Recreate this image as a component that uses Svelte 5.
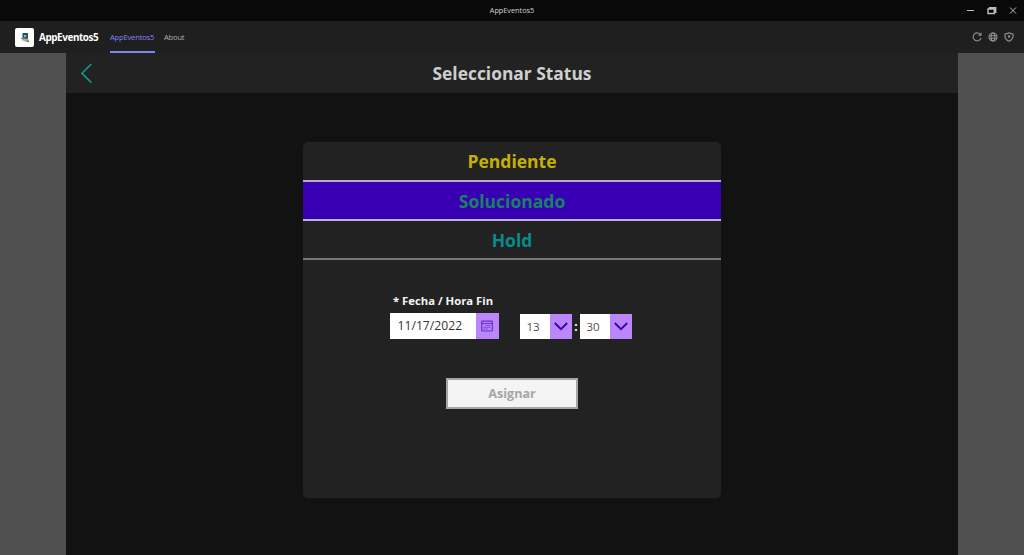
<script>
  const statuses = [
    { name: 'Pendiente', kind: 'pending' },
    { name: 'Solucionado', kind: 'solved' },
    { name: 'Hold', kind: 'hold' }
  ];
  let selected = $state('solved');
</script>

<div class="window">
  <div class="titlebar">
    <span></span>
    <span class="wintitle">AppEventos5</span>
    <div class="controls">
      <svg width="52" height="12" viewBox="0 0 52 12" fill="none" stroke="#bdbdbd">
        <path d="M1 5.5H8" />
        <path d="M22 4H28.3V8.5H22ZM23.5 3.4V2.7H29.7V7.3H28.4" stroke-width="1.4" />
        <path d="M44 2.5L50 8.5M50 2.5L44 8.5" />
      </svg>
    </div>
  </div>

  <nav>
    <div class="logo">
      <svg width="10" height="11" viewBox="0 0 10 11">
        <path d="M2.5 1H8V6.5L6.8 7H2.5Z" fill="#204f76" />
        <path d="M4 3H6.3V4.8H4Z" fill="#9cbad0" />
        <path d="M0.5 6L5 5.3L6 7L3 8Z" fill="#389ca6" />
        <path d="M1.5 8L7.8 6.4L8.8 8L6 9.7Z" fill="#d89b59" />
        <path d="M6 9.5L8.8 8V10.3Z" fill="#2476a5" />
      </svg>
    </div>
    <span class="brand">AppEventos5</span>
    <span class="tab active">AppEventos5</span>
    <span class="tab">About</span>
    <div class="tools">
      <svg width="42" height="12" viewBox="0 0 42 12" fill="none" stroke="#919191" stroke-width="1.1">
        <path d="M8.7 4A4 4 0 1 0 9 7M9 1.7V4.3H6.3" />
        <circle cx="21" cy="6" r="4" />
        <ellipse cx="21" cy="6" rx="1.8" ry="4" />
        <path d="M17 4.7H25M17 7.3H25" />
        <path d="M37 1.8Q39 3 41 3V6Q40.5 9 37 10.3Q33.5 9 33 6V3Q35 3 37 1.8Z" />
        <circle cx="37" cy="5.5" r="0.7" fill="#919191" />
      </svg>
    </div>
  </nav>

  <div class="stage">
    <main>
      <header>
        <svg class="back" width="12" height="20" viewBox="0 0 12 20" fill="none" stroke="#0da28f" stroke-width="1.6">
          <path d="M10.3 1L1 10.3L10.3 19.5" />
        </svg>
        <h1>Seleccionar Status</h1>
      </header>

      <section class="card">
        <div class="list">
          {#each statuses as s}
            <button class="status {s.kind}" class:selected={selected === s.kind} onclick={() => (selected = s.kind)}>
              <span>{s.name}</span>
            </button>
          {/each}
        </div>

        <div class="form">
          <div class="label">* Fecha / Hora Fin</div>
          <div class="fields">
            <div class="field date">
              <span class="value">11/17/2022</span>
              <span class="trigger">
                <svg width="12" height="12" viewBox="0 0 12 12" fill="none" stroke="#6a2fd0" stroke-width="1.2">
                  <rect x="0.7" y="1.2" width="10.6" height="9.8" rx="0.5" />
                  <path d="M1 3.5H11" />
                  <path d="M4.5 5.5H10M2.5 7.3H9.5M2.5 9H7" stroke-width="1" stroke-dasharray="1.2 0.7" />
                </svg>
              </span>
            </div>
            <div class="field time">
              <span class="value">13</span>
              <span class="trigger">
                <svg width="14" height="9" viewBox="0 0 14 9" fill="none" stroke="#3b00b5" stroke-width="1.9"><path d="M0.8 1L7 7.2L13.2 1" /></svg>
              </span>
            </div>
            <span class="colon">:</span>
            <div class="field time">
              <span class="value">30</span>
              <span class="trigger">
                <svg width="14" height="9" viewBox="0 0 14 9" fill="none" stroke="#3b00b5" stroke-width="1.9"><path d="M0.8 1L7 7.2L13.2 1" /></svg>
              </span>
            </div>
          </div>
          <button class="assign" disabled>Asignar</button>
        </div>
      </section>
    </main>
  </div>
</div>

<style>
  :global(body) { background: #505050; }
  * { box-sizing: border-box; }
  .window {
    width: 1024px;
    height: 555px;
    display: flex;
    flex-direction: column;
    overflow: hidden;
    font-family: 'Open Sans', sans-serif;
  }
  .titlebar {
    height: 21px;
    flex: none;
    background: #090909;
    display: grid;
    grid-template-columns: 1fr auto 1fr;
    align-items: center;
    color: #d2d2d2;
    font-size: 7.3px;
  }
  .wintitle { line-height: 10px; padding-bottom: 2px; }
  .controls { display: flex; justify-content: flex-end; padding-right: 6px; }
  nav {
    height: 32px;
    flex: none;
    background: #1f1f1f;
    display: flex;
    align-items: center;
    padding-left: 15px;
  }
  .logo {
    width: 19px;
    height: 19px;
    border-radius: 2px;
    background: #fff;
    display: flex;
    align-items: center;
    justify-content: center;
  }
  .brand {
    width: 71px;
    margin-left: 5px;
    color: #fff;
    font-weight: 700;
    font-size: 9.9px;
    line-height: 14px;
    letter-spacing: -0.4px;
    padding-bottom: 1px;
    white-space: nowrap;
  }
  .tab {
    height: 32px;
    line-height: 33px;
    color: #adadad;
    font-size: 7.6px;
    letter-spacing: -0.2px;
    margin-left: 9px;
  }
  .tab.active {
    width: 45px;
    margin-left: 0;
    color: #7f85f5;
    border-bottom: 2px solid #7f85f5;
    white-space: nowrap;
  }
  .tools { margin-left: auto; padding-right: 10px; display: flex; }
  .stage { flex: 1; background: #505050; padding: 0 66px; }
  main { height: 100%; background: #121212; }
  header {
    height: 40px;
    background: #222;
    display: flex;
    align-items: center;
    justify-content: center;
    padding: 0 15px;
  }
  header h1 {
    flex: 1;
    margin: 0 12px 0 0;
    text-align: center;
    font-size: 17.4px;
    line-height: 24px;
    padding-bottom: 1px;
    color: #cfcfcf;
  }
  .card {
    width: 418px;
    height: 356px;
    margin: 49px auto 0;
    background: #222;
    border-radius: 5px;
    overflow: hidden;
  }
  .list { display: flex; flex-direction: column; }
  .status {
    height: 39px;
    border: 0;
    border-bottom: 2px solid #777;
    padding: 0;
    background: none;
    font: 700 17.5px/36px 'Open Sans', sans-serif;
    text-align: center;
  }
  .pending { height: 40px; line-height: 38px; color: #c6b000; border-color: #b5adc4; }
  .solved { line-height: 38px; color: #178065; border-color: #bdb2dc; }
  .hold { color: #078b8b; }
  .selected { background: #3900b3; }
  .form { padding: 33px 0 0 87px; }
  .label {
    height: 20px;
    padding-left: 3px;
    color: #f5f5f5;
    font-weight: 700;
    font-size: 11.3px;
    line-height: 16px;
  }
  .fields { display: flex; align-items: center; height: 26px; }
  .field { display: flex; background: #fff; color: #333; }
  .field .value { flex: 1; }
  .trigger {
    width: 22px;
    background: #bb86fc;
    display: flex;
    align-items: center;
    justify-content: center;
  }
  .date { width: 109px; height: 26px; margin-right: 21px; font-size: 12.2px; line-height: 25px; }
  .date .value { padding-left: 7.5px; }
  .date .trigger { width: 23px; padding-right: 1px; }
  .time { width: 52px; height: 25px; font-size: 11.5px; line-height: 26px; color: #505050; }
  .time .value { padding-left: 6.5px; }
  .colon { width: 8px; text-align: center; color: #fff; font-weight: 700; font-size: 12px; line-height: 24px; padding-top: 2px; }
  .assign {
    display: block;
    width: 132px;
    height: 31px;
    margin: 39px 0 0 56px;
    padding: 0;
    border: 2px solid #a6a6a6;
    background: #f4f4f4;
    color: #a6a6a6;
    font: 700 12.6px/27px 'Open Sans', sans-serif;
  }
</style>
